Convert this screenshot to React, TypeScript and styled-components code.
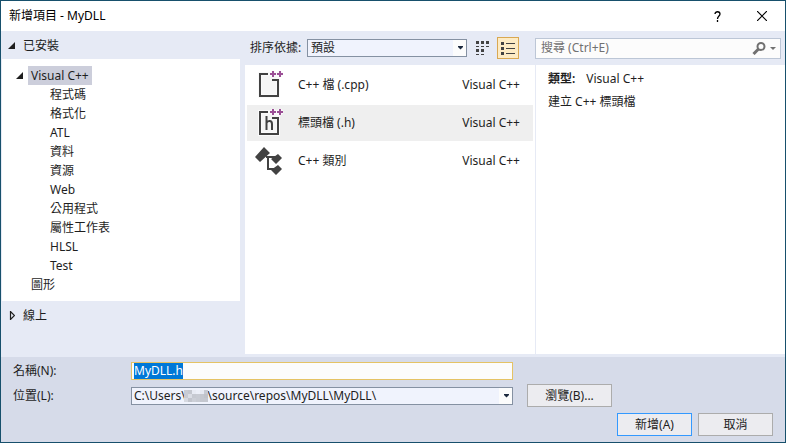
import React, { useEffect, useRef } from 'react';
import styled, { createGlobalStyle } from 'styled-components';

const GlobalStyle = createGlobalStyle`
  * { box-sizing: border-box; }
  body { margin: 0; }
  body, button, input, select {
    font-family: "Noto Sans", "Noto Sans CJK TC", sans-serif;
    font-size: 12px;
    line-height: 18px;
    color: #1e1e1e;
  }
`;

const Dialog = styled.div`
  display: flex;
  flex-direction: column;
  min-height: 100vh;
  border: 1px solid #17506c;
  background: #e6eaf5;
`;

const TitleBar = styled.header`
  display: flex;
  align-items: center;
  height: 30px;
  padding: 0 10px 0 8px;
  background: #fff;
`;

const Title = styled.h1`
  flex: 1;
  margin: 0;
  font-size: 12px;
  font-weight: 400;
  color: #000;
`;

const CaptionButton = styled.button`
  display: grid;
  place-items: center;
  width: 26px;
  height: 28px;
  margin-left: 19px;
  padding: 0;
  border: 0;
  background: transparent;
  color: #000;
`;

const Body = styled.div`
  flex: 1;
  display: grid;
  grid-template-columns: 244fr 290fr 250fr;
`;

const Column = styled.section`
  display: flex;
  flex-direction: column;
  min-width: 0;
`;

const GroupHeader = styled.button`
  display: flex;
  align-items: center;
  gap: 8px;
  height: 28px;
  padding: 1px 0 0 7px;
  border: 0;
  background: transparent;
  text-align: left;
`;

const Tree = styled.ul`
  margin: 0 5px 0 1px;
  padding: 7px 0;
  list-style: none;
  background: #fff;
`;

const TreeRow = styled.li<{ $level: number }>`
  display: flex;
  align-items: center;
  gap: 5px;
  height: 19px;
  padding-left: ${({ $level }) => ($level === 0 ? 14 : $level === 1 ? 26 : 45)}px;
`;

const TreeLabel = styled.span<{ $selected?: boolean }>`
  padding: 0 3px;
  line-height: 19px;
  background: ${({ $selected }) => ($selected ? '#cccedb' : 'transparent')};
`;

const Toolbar = styled.div`
  display: flex;
  align-items: center;
  height: 34px;
  padding: 0 16px 0 5px;
`;

const SortLabel = styled.label`
  width: 57px;
  white-space: nowrap;
`;

const ComboBox = styled.div`
  position: relative;
  display: flex;
  flex: 1;
  height: 18px;
`;

const ComboSelect = styled.select`
  appearance: none;
  flex: 1;
  min-width: 0;
  padding: 0 16px 0 3px;
  border: 1px solid #8591a2;
  border-radius: 0;
  outline: 0;
  line-height: 16px;
  background: linear-gradient(#fcfcfc, #fcfcfc) right / 13px 100% no-repeat #f0f3fd;
`;

const LocationSelect = styled(ComboSelect)`
  padding-left: 2px;
`;

const ComboArrow = styled.svg`
  position: absolute;
  top: 7px;
  right: 4px;
  pointer-events: none;
`;

const Redaction = styled.svg`
  position: absolute;
  top: 3px;
  left: 53px;
  pointer-events: none;
`;

const ViewButton = styled.button<{ $active?: boolean }>`
  display: grid;
  place-items: center;
  width: 22px;
  height: 22px;
  margin-left: ${({ $active }) => ($active ? 3 : 5)}px;
  padding: 0;
  border: 1px solid ${({ $active }) => ($active ? '#d9a852' : 'transparent')};
  background: ${({ $active }) => ($active ? '#fdebc4' : 'transparent')};
`;

const TemplateList = styled.ul`
  flex: 1;
  display: flex;
  flex-direction: column;
  gap: 2px;
  margin: 0 0 3px;
  padding: 2px;
  list-style: none;
  background: #fff;
`;

const TemplateRow = styled.li<{ $selected?: boolean }>`
  display: flex;
  align-items: center;
  height: 36px;
  padding: 0 13px 0 8px;
  background: ${({ $selected }) => ($selected ? '#efefef' : 'transparent')};
`;

const TemplateName = styled.span`
  flex: 1;
  margin-left: 13px;
`;

const SearchBox = styled.div`
  display: flex;
  align-items: center;
  flex: 1;
  height: 21px;
  padding: 0 4px 0 5px;
  border: 1px solid #bcc6d6;
  background: #fcfcfc;
`;

const SearchBar = styled.div`
  display: flex;
  align-items: center;
  height: 34px;
  padding-right: 4px;
`;

const SearchInput = styled.input`
  flex: 1;
  min-width: 0;
  padding: 0;
  border: 0;
  outline: 0;
  background: transparent;
  &::placeholder { color: #717171; opacity: 1; }
`;

const SearchButton = styled.button`
  display: flex;
  padding: 0;
  border: 0;
  background: transparent;
`;

const Details = styled.div`
  flex: 1;
  margin: 0 0 3px;
  padding: 5px 12px;
  border-left: 1px solid #e6eaf5;
  background: #fff;
`;

const DetailLine = styled.p`
  margin: 0 0 5px;
`;

const DetailKey = styled.strong`
  margin-right: 11px;
  font-weight: 600;
`;

const Footer = styled.footer`
  padding: 1px 12px 6px;
  background: #d6dbe9;
`;

const Field = styled.div`
  display: grid;
  align-items: center;
  height: 25px;
  padding-right: 161px;
`;

const LocationField = styled(Field)`
  grid-template-columns: 118px 1fr 14px 85px;
`;

const NameField = styled(Field)`
  grid-template-columns: 118px 1fr 99px;
`;

const NameInput = styled.input`
  height: 18px;
  min-width: 0;
  padding: 0 2px;
  border: 1px solid #e5c365;
  outline: 0;
  line-height: 16px;
  background: #fcfcfc;
  &::selection { color: #fff; background: #0078d7; }
`;

const PushButton = styled.button<{ $primary?: boolean }>`
  width: 75px;
  height: 23px;
  padding: 0;
  border: 1px solid ${({ $primary }) => ($primary ? '#3399ff' : '#acacac')};
  background: #ececf0;
`;

const BrowseButton = styled(PushButton)`
  grid-column: 4;
  width: 85px;
`;

const Actions = styled.div`
  display: flex;
  justify-content: flex-end;
  gap: 6px;
  padding-top: 5px;
`;

const Expanded = () => (
  <svg width="7" height="7" viewBox="0 0 7 7" aria-hidden="true">
    <path d="M7 0V7H0Z" fill="#1e1e1e" />
  </svg>
);

const Collapsed = () => (
  <svg width="7" height="9" viewBox="0 0 7 9" aria-hidden="true">
    <path d="M2.5 0.5V8.5L6.5 4.5Z" fill="none" stroke="#1e1e1e" strokeWidth="1.2" />
  </svg>
);

const DropArrow = () => (
  <ComboArrow width="5" height="4" viewBox="0 0 5 4" aria-hidden="true">
    <path d="M0 0H5V1L2.5 3.5L0 1Z" fill="#1b293e" />
  </ComboArrow>
);

const Pluses = () => (
  <>
    <path d="M14 3H20M17 0V6M21 3H27M24 0V6" stroke="#fafafa" strokeWidth="4" />
    <path d="M14 3H20M17 0V6M21 3H27M24 0V6" stroke="#9b4f96" strokeWidth="2" />
  </>
);

const FileIcon = ({ header }: { header?: boolean }) => (
  <svg width="30" height="28" viewBox="-1 0 30 28" fill="none" overflow="visible" aria-hidden="true">
    <path d="M4 3H22V25H4Z" fill="#f6f6f6" stroke="#fafafa" strokeWidth="4" />
    <path d="M12 3H4V25H22V9H16" stroke="#424242" strokeWidth="2" />
    {header && <path d="M10.5 7V21M10.5 14C11.5 11.5 16 11 16 15V21" stroke="#424242" strokeWidth="2" />}
    <Pluses />
  </svg>
);

const ClassIcon = () => (
  <svg width="30" height="28" viewBox="-1 0 30 28" aria-hidden="true">
    <path d="M10 10H20M12 10V22H20" fill="none" stroke="#424242" strokeWidth="2" />
    <path
      d="M8 0L14 6L4 15L-1 10ZM22 7L26 11L20 17L15 12ZM22 18L26 22L20 28L15 23Z"
      fill="#424242"
    />
  </svg>
);

const TilesIcon = () => (
  <svg width="14" height="15" viewBox="0 0 14 15" fill="#424242" aria-hidden="true">
    <path d="M0 0H3V3H0ZM5 0H8V3H5ZM10 0H13V3H10ZM0 5H3V6H0ZM5 5H8V6H5ZM10 5H13V6H10ZM0 8H3V11H0ZM5 8H8V11H5ZM0 13H3V14H0ZM5 13H8V14H5Z" />
  </svg>
);

const ListIcon = () => (
  <svg width="14" height="13" viewBox="0 0 14 13" fill="#424242" aria-hidden="true">
    <path d="M0 0H3V3H0ZM5 1H14V2H5ZM0 5H3V8H0ZM5 6H14V7H5ZM0 10H3V13H0ZM5 11H14V12H5Z" />
  </svg>
);

const languageItems = ['程式碼', '格式化', 'ATL', '資料', '資源', 'Web', '公用程式', '屬性工作表', 'HLSL', 'Test'];

const templates = [
  { name: 'C++ 檔 (.cpp)', icon: <FileIcon /> },
  { name: '標頭檔 (.h)', icon: <FileIcon header />, selected: true },
  { name: 'C++ 類別', icon: <ClassIcon /> },
];

const mosaic = [
  '#c9ccd4', '#c5c8d0', '#e8ebf4', '#eceff8', '#e6e9f2', '#c6c9d1',
  '#c8cbd3', '#dadde5', '#c6c9d1', '#c8cbd3', '#c4c7cf', '#bfc2ca',
  '#d6d9e1', '#c2c5cd', '#cccfd7', '#c8cbd3', '#c4c7cf', '#c4c7cf',
];

const hiddenUser = '\u00a0'.repeat(7);

export default function App() {
  const nameRef = useRef<HTMLInputElement>(null);

  useEffect(() => {
    nameRef.current?.focus();
    nameRef.current?.select();
  }, []);

  return (
    <>
      <GlobalStyle />
      <Dialog role="dialog" aria-labelledby="dialog-title">
        <TitleBar>
          <Title id="dialog-title">新增項目 - MyDLL</Title>
          <CaptionButton aria-label="說明">
            <svg width="7" height="11" viewBox="0 0 7 11" fill="none" stroke="#000" aria-hidden="true">
              <path d="M1 3C1 0 6 0 6 3C6 5 3.5 5 3.5 8M3.5 9V11" strokeWidth="1.3" />
            </svg>
          </CaptionButton>
          <CaptionButton aria-label="關閉">
            <svg width="10" height="10" viewBox="0 0 10 10" stroke="#000" aria-hidden="true">
              <path d="M0 0L10 10M10 0L0 10" strokeWidth="1.2" />
            </svg>
          </CaptionButton>
        </TitleBar>

        <Body>
          <Column>
            <GroupHeader aria-expanded="true">
              <Expanded />
              已安裝
            </GroupHeader>
            <Tree>
              <TreeRow $level={0}>
                <Expanded />
                <TreeLabel $selected>Visual C++</TreeLabel>
              </TreeRow>
              {languageItems.map((item) => (
                <TreeRow key={item} $level={2}>
                  <TreeLabel>{item}</TreeLabel>
                </TreeRow>
              ))}
              <TreeRow $level={1}>
                <TreeLabel>圖形</TreeLabel>
              </TreeRow>
            </Tree>
            <GroupHeader aria-expanded="false">
              <Collapsed />
              線上
            </GroupHeader>
          </Column>

          <Column>
            <Toolbar>
              <SortLabel htmlFor="sort">排序依據:</SortLabel>
              <ComboBox>
                <ComboSelect id="sort">
                  <option>預設</option>
                </ComboSelect>
                <DropArrow />
              </ComboBox>
              <ViewButton aria-label="中型圖示">
                <TilesIcon />
              </ViewButton>
              <ViewButton aria-label="小型圖示" $active>
                <ListIcon />
              </ViewButton>
            </Toolbar>
            <TemplateList>
              {templates.map(({ name, icon, selected }) => (
                <TemplateRow key={name} $selected={selected}>
                  {icon}
                  <TemplateName>{name}</TemplateName>
                  <span>Visual C++</span>
                </TemplateRow>
              ))}
            </TemplateList>
          </Column>

          <Column>
            <SearchBar>
              <SearchBox>
                <SearchInput aria-label="搜尋" placeholder="搜尋 (Ctrl+E)" />
                <SearchButton aria-label="搜尋選項">
                  <svg width="24" height="13" viewBox="0 0 24 13" fill="none" aria-hidden="true">
                    <circle cx="9" cy="4.5" r="3.5" stroke="#717171" strokeWidth="2" />
                    <path d="M6.5 7L1.5 12" stroke="#717171" strokeWidth="3" />
                    <path d="M18 5H24L21 8Z" fill="#717171" />
                  </svg>
                </SearchButton>
              </SearchBox>
            </SearchBar>
            <Details>
              <DetailLine>
                <DetailKey>類型:</DetailKey>
                Visual C++
              </DetailLine>
              <DetailLine>建立 C++ 標頭檔</DetailLine>
            </Details>
          </Column>
        </Body>

        <Footer>
          <NameField>
            <label htmlFor="name">名稱(N):</label>
            <NameInput id="name" ref={nameRef} defaultValue="MyDLL.h" />
          </NameField>
          <LocationField>
            <label htmlFor="location">位置(L):</label>
            <ComboBox>
              <LocationSelect id="location">
                <option>{`C:\\Users\\${hiddenUser}\\source\\repos\\MyDLL\\MyDLL\\`}</option>
              </LocationSelect>
              <Redaction width="24" height="12" viewBox="0 0 24 12" aria-hidden="true">
                {mosaic.map((fill, i) => (
                  <rect key={i} x={(i % 6) * 4} y={Math.floor(i / 6) * 4} width="4" height="4" fill={fill} />
                ))}
              </Redaction>
              <DropArrow />
            </ComboBox>
            <BrowseButton>瀏覽(B)...</BrowseButton>
          </LocationField>
          <Actions>
            <PushButton $primary>新增(A)</PushButton>
            <PushButton>取消</PushButton>
          </Actions>
        </Footer>
      </Dialog>
    </>
  );
}
